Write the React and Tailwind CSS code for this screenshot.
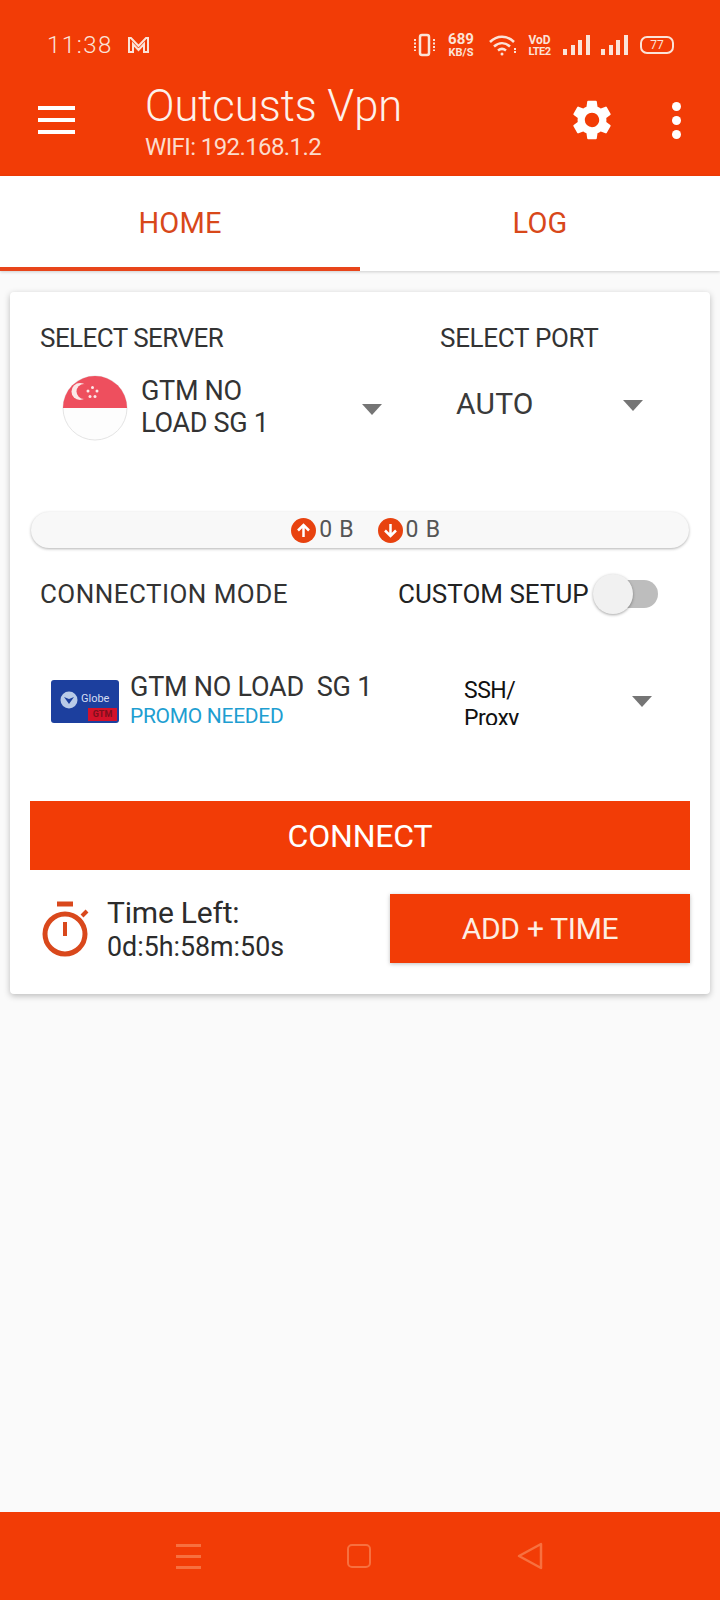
import React from "react";

const Caret = () => (
  <svg width="20" height="11" viewBox="0 0 20 11">
    <path d="M0 0h20L10 11z" fill="#757575" />
  </svg>
);

const Signal = () => (
  <svg width="27" height="20" viewBox="0 0 27 20" fill="#fbe3d8">
    <rect x="0" y="14" width="4" height="6" />
    <rect x="8" y="10" width="4" height="10" />
    <rect x="15" y="5" width="4" height="15" />
    <rect x="23" y="0" width="4" height="20" />
  </svg>
);

function StatusBar() {
  return (
    <div className="flex items-center h-[26px] pl-[47px] pr-[46px] text-[#fbe3d8]">
      <span className="text-[24px] tracking-[1.5px] font-light w-[80px]">11:38</span>
      <svg width="23" height="18" viewBox="0 0 23 18" fill="none" stroke="#fbe3d8" strokeWidth="2">
        <path d="M2 16V2h2l7.500 8L19 2h2v14h-4V8l-5.500 6L6 8v8z" />
      </svg>
      <div className="ml-auto flex items-center">
        <svg width="23" height="24" viewBox="0 0 23 24" fill="none" stroke="#fbe3d8" strokeWidth="2.500">
          <rect x="7" y="2" width="9" height="20" rx="2" />
          <path d="M2 6v12M21 6v12" strokeDasharray="2 1.500" strokeWidth="2" />
        </svg>
        <div className="ml-[10px] w-[30px] flex flex-col items-center font-bold leading-none">
          <span className="text-[15px]">689</span>
          <span className="text-[11px]">KB/S</span>
        </div>
        <svg className="ml-[13px]" width="29" height="22" viewBox="0 0 29 22" fill="none" stroke="#fbe3d8" strokeWidth="2.500">
          <path d="M1 8c7-7 17-7 24 0M5 12.500c5-4.500 11-4.500 16 0M9 16.500c2.500-2 5.500-2 8 0" />
          <circle cx="13" cy="20" r="1.500" fill="#fbe3d8" stroke="none" />
          <path d="M26 14v6" strokeDasharray="2 1" strokeWidth="2" />
        </svg>
        <div className="ml-[9px] w-[25px] flex flex-col items-center font-bold leading-none">
          <span className="text-[12px]">VoD</span>
          <span className="text-[11px] tracking-[-0.5px]">LTE2</span>
        </div>
        <div className="ml-[11px]">
          <Signal />
        </div>
        <div className="ml-[11px]">
          <Signal />
        </div>
        <div className="ml-[12px] w-[34px] h-[18px] rounded-[7px] border-2 border-[#fbe3d8] flex items-center justify-center text-[12px] leading-none">
          77
        </div>
      </div>
    </div>
  );
}

function Toolbar() {
  return (
    <div className="flex items-center mt-[26px] pl-[38px] pr-[39px] text-white">
      <div className="w-[37px] flex flex-col gap-[8px] mb-[7px]">
        <div className="h-[4px] bg-white" />
        <div className="h-[4px] bg-white" />
        <div className="h-[4px] bg-white" />
      </div>
      <div className="ml-[70px] flex flex-col">
        <span className="text-[43.500px] leading-[46px] font-light text-[#fdf1ea]">Outcusts Vpn</span>
        <span className="mt-[2px] text-[24px] leading-[30px] tracking-[-0.6px] text-[#fbdccd]">WIFI: 192.168.1.2</span>
      </div>
      <svg className="ml-auto mb-[6px]" width="48" height="48" viewBox="0 0 24 24" fill="#fff">
        <path d="M19.140 12.940c.040-.3.060-.61.060-.94 0-.32-.020-.64-.070-.94l2.030-1.580a.49.490 0 0 0 .120-.610l-1.920-3.320a.488.488 0 0 0-.590-.220l-2.390.960c-.500-.380-1.030-.700-1.620-.940l-.360-2.540a.484.484 0 0 0-.480-.410h-3.840c-.240 0-.430.170-.470.410l-.360 2.540c-.590.240-1.130.570-1.620.940l-2.390-.960c-.220-.080-.470 0-.590.220L2.740 8.870c-.120.210-.080.470.120.610l2.030 1.580c-.050.300-.090.630-.090.940s.020.640.070.940l-2.030 1.580a.49.490 0 0 0-.120.610l1.920 3.320c.120.220.370.290.590.220l2.390-.960c.500.380 1.030.700 1.620.940l.360 2.540c.050.240.240.410.480.410h3.840c.240 0 .440-.170.470-.410l.360-2.540c.590-.240 1.130-.560 1.620-.940l2.390.960c.220.080.470 0 .590-.220l1.920-3.320c.120-.220.070-.470-.120-.610l-2.010-1.580zM12 15.600A3.610 3.610 0 0 1 8.400 12c0-1.980 1.620-3.600 3.600-3.600s3.600 1.620 3.600 3.600-1.620 3.600-3.600 3.600z" />
      </svg>
      <div className="ml-[56px] mb-[6px] flex flex-col gap-[5px] items-center">
        <div className="w-[9px] h-[9px] rounded-full bg-white" />
        <div className="w-[9px] h-[9px] rounded-full bg-white" />
        <div className="w-[9px] h-[9px] rounded-full bg-white" />
      </div>
    </div>
  );
}

function Tabs() {
  return (
    <div className="flex h-[95px] bg-white shadow-[0_1px_3px_rgba(0,0,0,0.18)] text-[29px] tracking-[0.2px] text-[#d8481a]">
      <div className="w-1/2 flex items-center justify-center border-b-[4px] border-[#e8451a] pt-[4px]">HOME</div>
      <div className="w-1/2 flex items-center justify-center">LOG</div>
    </div>
  );
}

const Flag = () => (
  <svg width="66" height="66" viewBox="0 0 66 66">
    <circle cx="33" cy="33" r="32" fill="#fdfdfd" stroke="#e4e4e4" />
    <path d="M1 33a32 32 0 0 1 64 0z" fill="#ee4f5e" />
    <circle cx="18" cy="16.500" r="8.500" fill="#fbe8e8" />
    <circle cx="22" cy="16.500" r="7.500" fill="#ee4f5e" />
    <g fill="#fbe8e8">
      <circle cx="30.500" cy="12.500" r="1.500" />
      <circle cx="26" cy="16" r="1.500" />
      <circle cx="35" cy="16" r="1.500" />
      <circle cx="28" cy="21.500" r="1.500" />
      <circle cx="33" cy="21.500" r="1.500" />
    </g>
  </svg>
);

const GlobeLogo = () => (
  <div className="relative w-[68px] h-[43px] rounded-[3px] bg-[#1c3f9e] flex items-center pl-[9px] gap-[3px]">
    <svg width="18" height="18" viewBox="0 0 18 18" className="-mt-[3px]">
      <circle cx="9" cy="9" r="8.500" fill="#b9cbe8" />
      <path d="M4 6l5 7 5-7-5 2z" fill="#1c3f9e" />
    </svg>
    <span className="text-[11px] text-[#d4def2] -mt-[3px]">Globe</span>
    <span className="absolute right-[2px] bottom-[2px] w-[29px] h-[13px] bg-[#d3122a] text-[9px] leading-[13px] text-center font-bold text-[#7c0f1c]">GTM</span>
  </div>
);

const Arrow = ({ up }) => (
  <span className="w-[25px] h-[25px] rounded-full bg-[#e8420f] flex items-center justify-center">
    <svg width="15" height="15" viewBox="0 0 15 15" fill="none" stroke="#fff" strokeWidth="2.500" className={up ? "" : "rotate-180"}>
      <path d="M7.500 14V2M2 7.500L7.500 2 13 7.500" />
    </svg>
  </span>
);

function Card() {
  return (
    <div className="mx-[10px] mt-[21px] h-[702px] bg-white rounded-[4px] shadow-[0_2px_6px_rgba(0,0,0,0.25)] px-[20px] text-[#333]">
      {/* server / port */}
      <div className="flex pt-[30px] pl-[10px] text-[26px] leading-[32px] tracking-[-0.55px]">
        <span className="w-[400px]">SELECT SERVER</span>
        <span className="tracking-[-0.3px]">SELECT PORT</span>
      </div>
      <div className="flex items-center mt-[21px] h-[66px]">
        <div className="ml-[32px]">
          <Flag />
        </div>
        <div className="ml-[13px] pb-[3px] w-[221px] text-[27px] leading-[32px] tracking-[-0.3px]">
          GTM NO
          <br />
          LOAD SG 1
        </div>
        <div className="mt-[3px]">
          <Caret />
        </div>
        <span className="ml-[74px] mb-[10px] text-[30px] tracking-[0.2px] text-[#3a3a3a]">AUTO</span>
        <div className="ml-[89px] mb-[5px]">
          <Caret />
        </div>
      </div>

      {/* traffic */}
      <div className="mt-[71px] mx-px h-[36px] rounded-[18px] bg-[#f8f8f8] shadow-[0_1px_3px_rgba(0,0,0,0.3)] flex items-center justify-center pl-[12px] text-[23px] tracking-[0.8px] text-[#555]">
        <Arrow up />
        <span className="ml-[3px] mr-[23px]">0 B</span>
        <Arrow />
        <span className="ml-[3px]">0 B</span>
      </div>

      {/* mode */}
      <div className="flex items-center mt-[26px] h-[40px] pl-[10px] text-[26px]">
        <span className="w-[358px] tracking-[0.45px]">CONNECTION MODE</span>
        <span className="text-[#222]">CUSTOM SETUP</span>
        <div className="relative ml-[4px] w-[65px] h-[28px]">
          <div className="absolute left-[20px] right-0 inset-y-0 rounded-full bg-[#bdbdbd]" />
          <div className="absolute left-0 -top-[6px] w-[40px] h-[40px] rounded-full bg-[#f1f1f1] shadow-[0_1px_3px_rgba(0,0,0,0.35)]" />
        </div>
      </div>

      <div className="flex items-center mt-[57px] h-[60px]">
        <div className="ml-[21px]">
          <GlobeLogo />
        </div>
        <div className="ml-[11px] w-[334px] flex flex-col">
          <span className="text-[27px] leading-[30px] tracking-[-0.25px] whitespace-pre">GTM NO LOAD  SG 1</span>
          <span className="text-[21px] leading-[28px] tracking-[-0.3px] text-[#1e9ed1]">PROMO NEEDED</span>
        </div>
        {/* the spinner clips its second line in the app too */}
        <div className="self-start h-[54px] pt-[6px] w-[168px] overflow-hidden text-[23px] leading-[28px] tracking-[-0.5px] text-[#111]">
          SSH/
          <br />
          Proxy
        </div>
        <div>
          <Caret />
        </div>
      </div>

      <button className="mt-[70px] w-full h-[69px] bg-[#f23c06] text-white text-[32px] tracking-[-0.2px]">
        CONNECT
      </button>

      <div className="flex items-center mt-[24px] h-[69px]">
        <svg className="ml-[11px]" width="50" height="56" viewBox="0 0 50 56" fill="none" stroke="#d9481c" strokeWidth="5">
          <path d="M16 3h16" strokeWidth="5" />
          <circle cx="24" cy="33" r="20" />
          <path d="M24 21v14" strokeWidth="4" />
          <path d="M41 15l5-5" strokeWidth="4" />
        </svg>
        <div className="ml-[16px] flex flex-col w-[283px] text-[#2c2c2c]">
          <span className="text-[30px] leading-[36px] tracking-[-0.2px]">Time Left:</span>
          <span className="text-[26.800px] leading-[32px]">0d:5h:58m:50s</span>
        </div>
        <button className="w-[300px] h-[69px] bg-[#f23c06] text-[#fdeee3] text-[30px] tracking-[-0.3px] shadow-[0_1px_4px_rgba(0,0,0,0.25)]">
          ADD + TIME
        </button>
      </div>
    </div>
  );
}

function NavBar() {
  return (
    <div className="mt-auto h-[88px] bg-[#f23c06] flex items-center justify-between pl-[176px] pr-[177px]">
      <div className="w-[25px] flex flex-col gap-[8px]">
        <div className="h-[3px] bg-[#f7703f]" />
        <div className="h-[3px] bg-[#f7703f]" />
        <div className="h-[3px] bg-[#f7703f]" />
      </div>
      <div className="w-[24px] h-[24px] rounded-[5px] border-2 border-[#f7703f]" />
      <svg width="26" height="28" viewBox="0 0 26 28" fill="none" stroke="#f7703f" strokeWidth="2.500" strokeLinejoin="round">
        <path d="M24 2v24L2 14z" />
      </svg>
    </div>
  );
}

export default function App() {
  return (
    <div className="w-[720px] h-[1600px] flex flex-col bg-[#fafafa] font-['Roboto',sans-serif]">
      <div className="h-[176px] bg-[#f23c06] pt-[32px]">
        <StatusBar />
        <Toolbar />
      </div>
      <Tabs />
      <Card />
      <NavBar />
    </div>
  );
}
